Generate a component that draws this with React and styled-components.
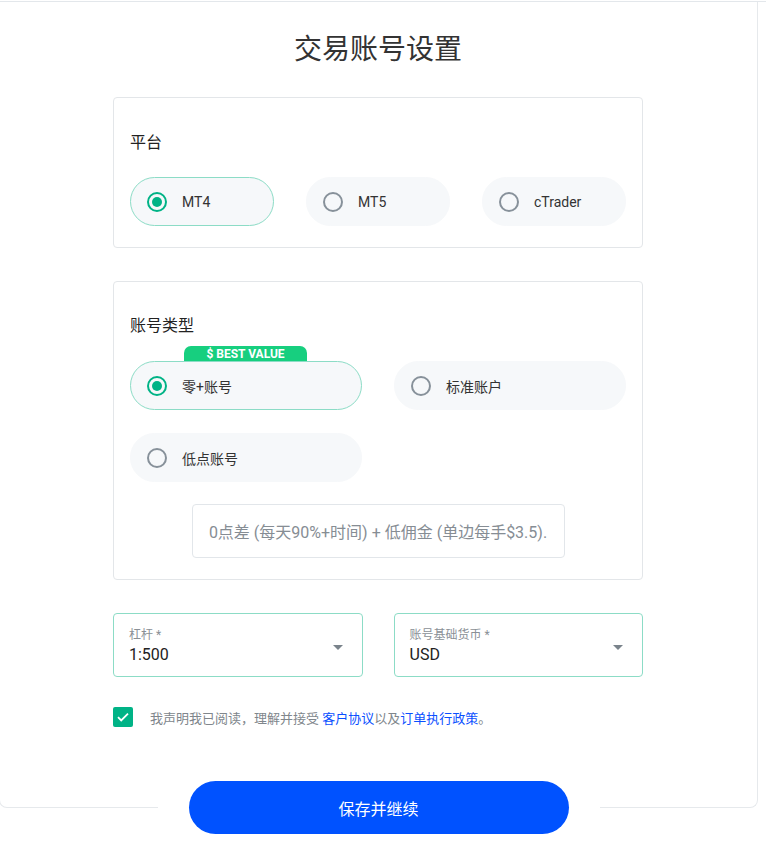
import React, { useState } from "react";
import styled, { createGlobalStyle } from "styled-components";

const GlobalStyle = createGlobalStyle`
  html {
    padding-top: 1px;
  }
  body {
    margin: 0;
    border-top: 1px solid #e3e7eb;
    background: #fff;
    font-family: Roboto, "Noto Sans CJK SC", sans-serif;
    color: #333;
    overflow-x: hidden;
  }
  * { box-sizing: border-box; }
`;

const Page = styled.div`
  width: 759px;
  margin-left: -1px;
  display: flex;
  flex-direction: column;
`;

const Card = styled.div`
  border: 1px solid #e6e9ec;
  border-top: none;
  border-radius: 0 0 8px 8px;
  padding: 28px 114px 80px 113px;
  display: flex;
  flex-direction: column;
`;

const Title = styled.h1`
  margin: 0 0 27px;
  font-size: 28px;
  line-height: 40px;
  font-weight: 400;
  text-align: center;
  color: #333;
`;

const Section = styled.section`
  border: 1px solid #e3e6e9;
  border-radius: 4px;
  padding: ${(p) => p.$pad};
  margin-bottom: 33px;
`;

const Label = styled.div`
  font-size: 16px;
  line-height: 24px;
  color: #222;
  margin-bottom: ${(p) => p.$gap}px;
`;

const OptionGrid = styled.div`
  display: grid;
  grid-template-columns: repeat(${(p) => p.$cols}, 1fr);
  column-gap: ${(p) => p.$colGap}px;
  row-gap: 23px;
`;

const Pill = styled.label`
  position: relative;
  height: 49px;
  display: flex;
  align-items: center;
  gap: 15px;
  padding-left: 16px;
  border-radius: 25px;
  background: #f6f8fa;
  border: 1px solid ${(p) => (p.$active ? "#8cdcc6" : "#f6f8fa")};
  font-size: 14px;
  color: #333;
  cursor: pointer;
`;

const Radio = styled.span`
  width: 20px;
  height: 20px;
  border-radius: 50%;
  border: 2px solid ${(p) => (p.$active ? "#00b386" : "#87919a")};
  display: flex;
  align-items: center;
  justify-content: center;
  flex-shrink: 0;
  &::after {
    content: "";
    width: 10px;
    height: 10px;
    border-radius: 50%;
    background: #00b386;
    display: ${(p) => (p.$active ? "block" : "none")};
  }
`;

const Badge = styled.span`
  position: absolute;
  top: -16px;
  left: 53px;
  width: 123px;
  height: 15px;
  border-radius: 7px 7px 0 0;
  background: #17cf7f;
  color: #fff;
  font-size: 12px;
  font-weight: 700;
  line-height: 16px;
  text-align: center;
`;

const Note = styled.div`
  width: 373px;
  margin: 22px auto 0;
  height: 54px;
  border: 1px solid #e2e6ea;
  border-radius: 4px;
  display: flex;
  align-items: center;
  justify-content: center;
  font-size: 16px;
  color: #868d94;
`;

const SelectRow = styled.div`
  display: grid;
  grid-template-columns: 1fr 1fr;
  gap: 31px;
`;

const Select = styled.div`
  position: relative;
  height: 64px;
  border: 1px solid #8cdcc6;
  border-radius: 4px;
  padding: 13px 15px 0;
`;

const SelectLabel = styled.div`
  font-size: 12px;
  line-height: 16px;
  color: #8a9096;
`;

const SelectValue = styled.div`
  font-size: 16px;
  line-height: 24px;
  color: #222;
`;

const Caret = styled.span`
  position: absolute;
  right: 19px;
  top: 31px;
  border-left: 5px solid transparent;
  border-right: 5px solid transparent;
  border-top: 5px solid #7a838b;
`;

const Agree = styled.div`
  display: flex;
  align-items: center;
  gap: 17px;
  margin-top: 30px;
  font-size: 13px;
  color: #80868c;
`;

const Check = styled.span`
  width: 20px;
  height: 20px;
  border-radius: 2px;
  background: #00b386;
  display: flex;
  align-items: center;
  justify-content: center;
`;

const Link = styled.a`
  color: #0a4fff;
  text-decoration: none;
`;

const ButtonWrap = styled.div`
  align-self: center;
  margin-top: -27px;
  background: #fff;
  padding: 0 31px 12px;
`;

const Button = styled.button`
  width: 380px;
  height: 53px;
  border: none;
  border-radius: 27px;
  background: #0052ff;
  color: #fff;
  font-family: inherit;
  font-size: 16px;
  cursor: pointer;
`;

function Option({ label, active, badge, onClick }) {
  return (
    <Pill $active={active} onClick={onClick}>
      {badge && <Badge>$ BEST VALUE</Badge>}
      <Radio $active={active} />
      {label}
    </Pill>
  );
}

export default function App() {
  const [platform, setPlatform] = useState("MT4");
  const [type, setType] = useState("零+账号");

  return (
    <Page>
      <GlobalStyle />
      <Card>
        <Title>交易账号设置</Title>

        <Section $pad="33px 16px 21px">
          <Label $gap={22}>平台</Label>
          <OptionGrid $cols={3} $colGap={32}>
            {["MT4", "MT5", "cTrader"].map((p) => (
              <Option
                key={p}
                label={p}
                active={platform === p}
                onClick={() => setPlatform(p)}
              />
            ))}
          </OptionGrid>
        </Section>

        <Section $pad="32px 16px 21px">
          <Label $gap={23}>账号类型</Label>
          <OptionGrid $cols={2} $colGap={32}>
            {["零+账号", "标准账户", "低点账号"].map((t, i) => (
              <Option
                key={t}
                label={t}
                badge={i === 0}
                active={type === t}
                onClick={() => setType(t)}
              />
            ))}
          </OptionGrid>
          <Note>0点差 (每天90%+时间) + 低佣金 (单边每手$3.5).</Note>
        </Section>

        <SelectRow>
          <Select>
            <SelectLabel>杠杆 *</SelectLabel>
            <SelectValue>1:500</SelectValue>
            <Caret />
          </Select>
          <Select>
            <SelectLabel>账号基础货币 *</SelectLabel>
            <SelectValue>USD</SelectValue>
            <Caret />
          </Select>
        </SelectRow>

        <Agree>
          <Check>
            <svg width="14" height="14" viewBox="0 0 14 14">
              <path
                d="M2 7.2l3.2 3.2L12 3.6"
                fill="none"
                stroke="#fff"
                strokeWidth="1.8"
              />
            </svg>
          </Check>
          <span>
            我声明我已阅读，理解并接受 <Link href="#">客户协议</Link>以及
            <Link href="#">订单执行政策</Link>。
          </span>
        </Agree>
      </Card>
      <ButtonWrap>
        <Button>保存并继续</Button>
      </ButtonWrap>
    </Page>
  );
}
